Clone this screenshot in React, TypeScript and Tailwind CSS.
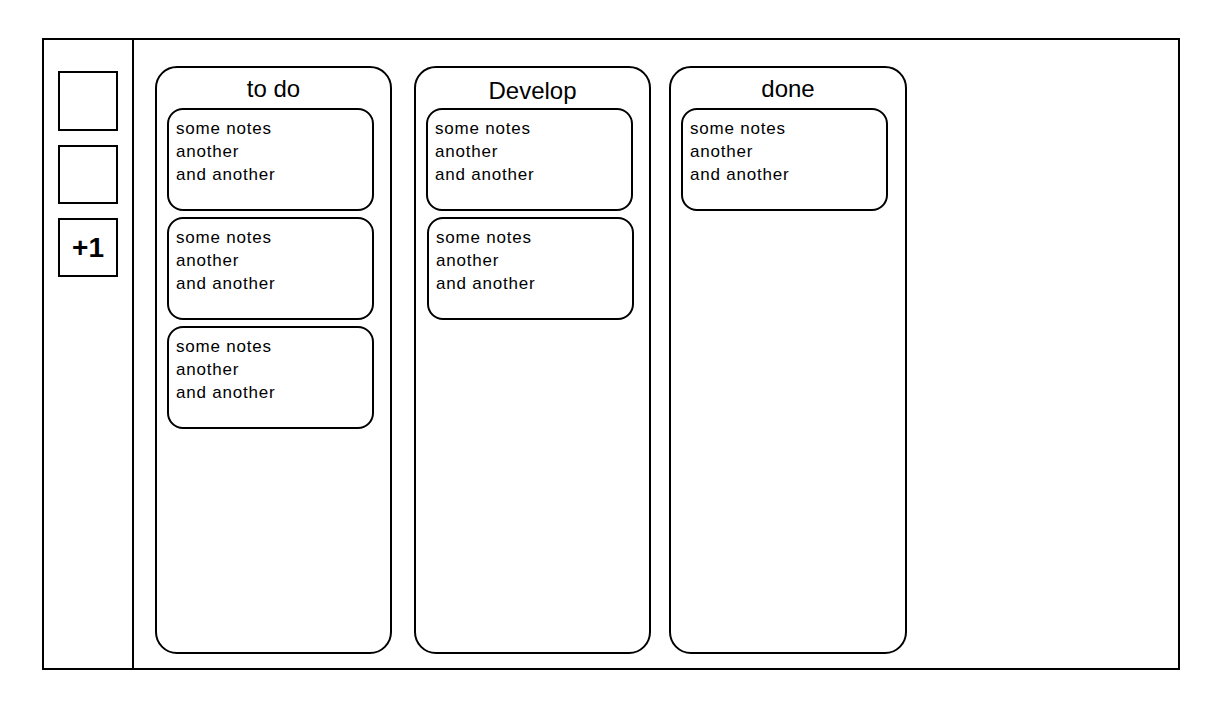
const Card = ({ className }: { className: string }) => (
  <div className={`w-[207px] h-[103px] border-2 border-black rounded-[16px] px-[7px] pt-[7px] text-[17px] leading-[23px] tracking-[0.8px] ${className}`}>
    <div>some notes</div>
    <div>another</div>
    <div>and another</div>
  </div>
);

const App = () => {
  const columns = [
    { title: 'to do', width: 'w-[237px]', margin: '', titlePad: 'pt-[7px]', cards: ['ml-[10px]', 'ml-[10px]', 'ml-[10px]'] },
    { title: 'Develop', width: 'w-[237px]', margin: 'ml-[22px]', titlePad: 'pt-[9px]', cards: ['ml-[10px]', 'ml-[11px]'] },
    { title: 'done', width: 'w-[238px]', margin: 'ml-[18px]', titlePad: 'pt-[7px]', cards: ['ml-[10px]'] },
  ];

  return (
    <div className="w-[1212px] h-[703px] bg-white pl-[42px] pt-[38px] text-black" style={{ fontFamily: '"Liberation Sans", Arial, sans-serif' }}>
      <div className="w-[1138px] h-[632px] border-2 border-black flex">
        {/* Sidebar */}
        <div className="w-[90px] h-full border-r-2 border-black pl-[14px] pt-[31px] flex flex-col">
          <div className="w-[60px] h-[60px] border-2 border-black" />
          <div className="w-[60px] h-[59px] border-2 border-black mt-[14px]" />
          <div className="w-[60px] h-[59px] border-2 border-black mt-[14px] flex items-center justify-center text-[28px] font-semibold">
            +1
          </div>
        </div>

        {/* Board */}
        <div className="flex pl-[21px] pt-[26px]">
          {columns.map((col) => (
            <div key={col.title} className={`${col.width} ${col.margin} h-[588px] border-2 border-black rounded-[22px] flex flex-col`}>
              <div className={`h-[40px] ${col.titlePad} text-center text-[24px] leading-[28px]`}>{col.title}</div>
              <div className="flex flex-col gap-[6px]">
                {col.cards.map((c, i) => (
                  <Card key={i} className={c} />
                ))}
              </div>
            </div>
          ))}
        </div>
      </div>
    </div>
  );
};

export default App;
